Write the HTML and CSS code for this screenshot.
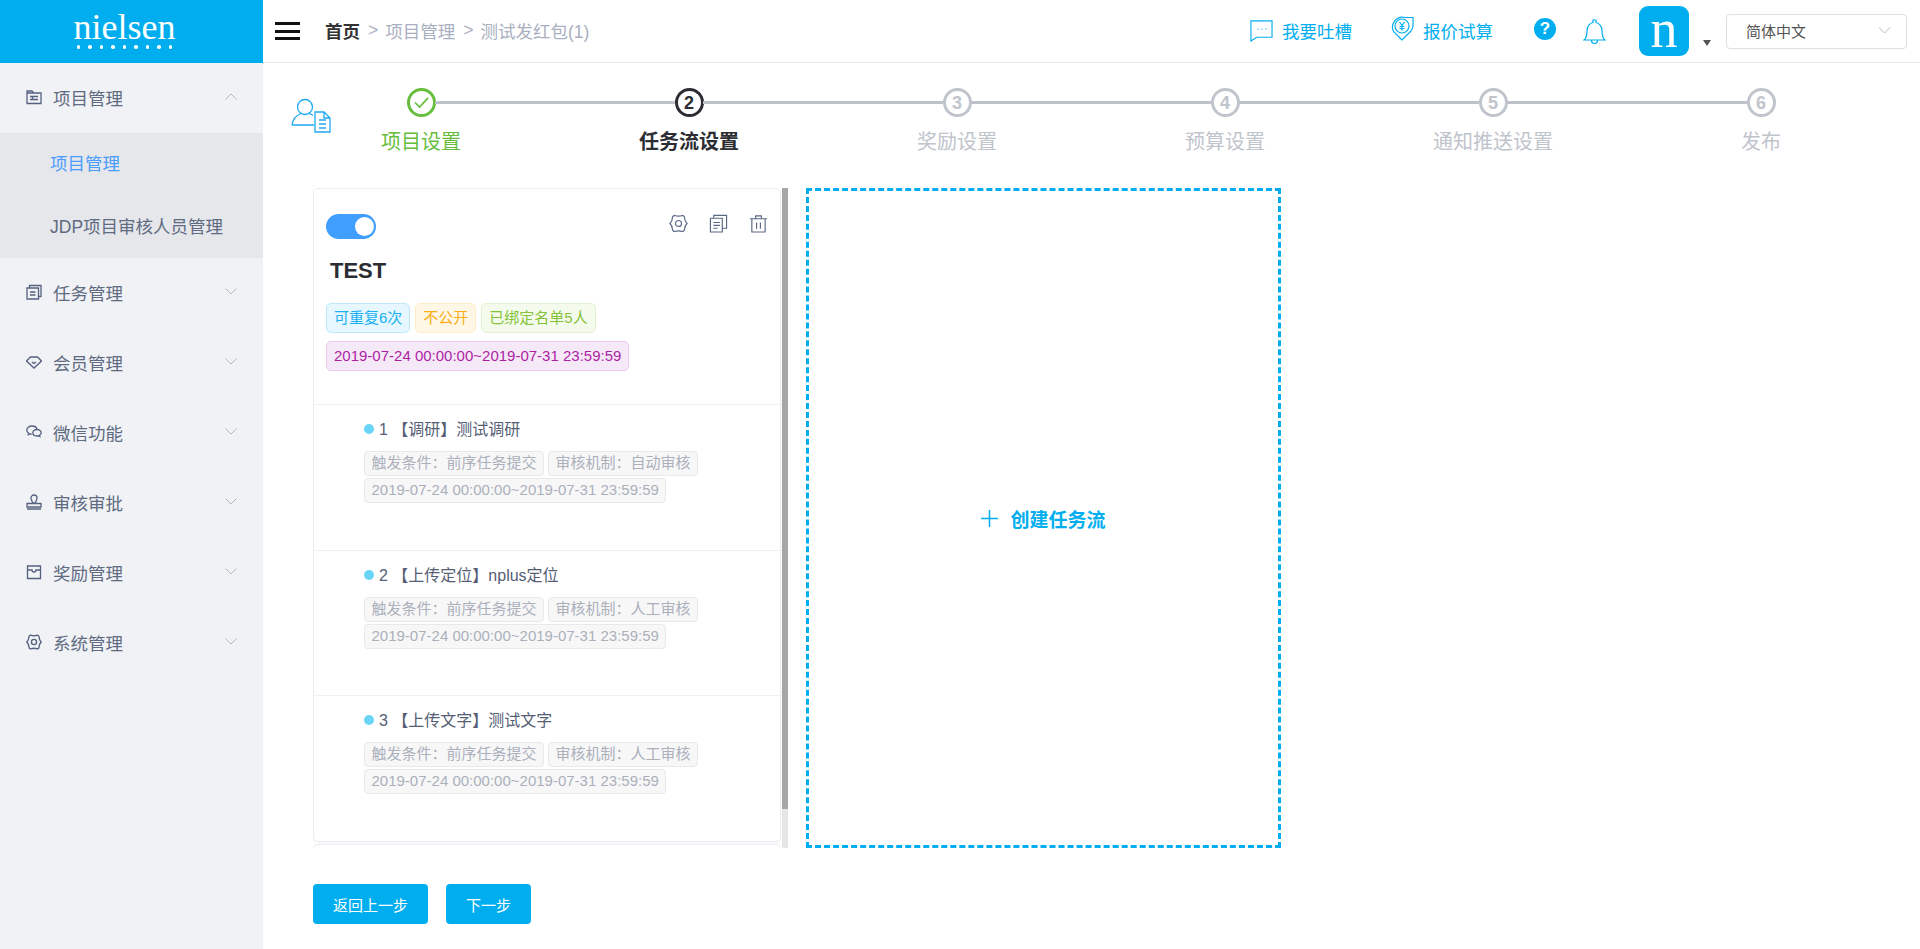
FILE: index.html
```html
<!DOCTYPE html>
<html lang="zh-CN">
<head>
  <meta charset="UTF-8">
  <title>任务流设置</title>
  <link rel="stylesheet" href="styles.css">
</head>
<body>
  <aside class="sidebar">
    <div class="logo">
      <span class="logo-word">nielsen</span>
      <span class="logo-dots"><i></i><i></i><i></i><i></i><i></i><i></i><i></i><i></i><i></i></span>
    </div>
    <nav class="menu">
      <div class="menu-item">
        <svg class="menu-icon" viewBox="0 0 16 16"><path d="M1 14.500V2h5l1.500 2h7.500v10.500zM1 4h6.500M4 7.500h8M4 10.500h8M6.500 7v4"/></svg>
        <span class="menu-label">项目管理</span>
        <svg class="chevron" viewBox="0 0 12 7"><path d="M.5 6.500 6 1l5.500 5.500"/></svg>
      </div>
      <div class="submenu">
        <div class="sub-item active">项目管理</div>
        <div class="sub-item">JDP项目审核人员管理</div>
      </div>
      <div class="menu-item">
        <svg class="menu-icon" viewBox="0 0 16 16"><path d="M1 4h11.500v11H1zM3.500 4V1.500H15V12.500h-2.500M4 8h5.500M4 11h5.500"/></svg>
        <span class="menu-label">任务管理</span>
        <svg class="chevron" viewBox="0 0 12 7"><path d="M.5.500 6 6l5.500-5.500"/></svg>
      </div>
      <div class="menu-item">
        <svg class="menu-icon" viewBox="0 0 16 16"><path d="M4.500 3h7L15.500 7 8 14 .5 7zM6 8l2 1.500L10 8"/></svg>
        <span class="menu-label">会员管理</span>
        <svg class="chevron" viewBox="0 0 12 7"><path d="M.5.500 6 6l5.500-5.500"/></svg>
      </div>
      <div class="menu-item">
        <svg class="menu-icon" viewBox="0 0 16 16"><path d="M6 2C3 2 .8 3.800.8 6c0 1.300.7 2.400 1.900 3.200l-.4 1.500 1.800-.8c.6.200 1 .3 1.700.3M6 2c2.500 0 4.500 1.300 5 3"/><path d="M11 5.500c-2.400 0-4.200 1.500-4.200 3.300S8.600 12 11 12c.5 0 1-.1 1.400-.2l1.500.8-.3-1.400c1-.7 1.600-1.500 1.600-2.400 0-1.800-1.800-3.300-4.200-3.300z"/></svg>
        <span class="menu-label">微信功能</span>
        <svg class="chevron" viewBox="0 0 12 7"><path d="M.5.500 6 6l5.500-5.500"/></svg>
      </div>
      <div class="menu-item">
        <svg class="menu-icon" viewBox="0 0 16 16"><path d="M6.500 9c0-2-1.500-3-1.500-5a3 3 0 0 1 6 0c0 2-1.500 3-1.500 5zM1 9.500h14V13H1zM1 15h14"/></svg>
        <span class="menu-label">审核审批</span>
        <svg class="chevron" viewBox="0 0 12 7"><path d="M.5.500 6 6l5.500-5.500"/></svg>
      </div>
      <div class="menu-item">
        <svg class="menu-icon" viewBox="0 0 16 16"><path d="M1.500 2h13v12.500h-13zM1.500 6h4.500a2 2 0 0 0 4 0h4.500"/></svg>
        <span class="menu-label">奖励管理</span>
        <svg class="chevron" viewBox="0 0 12 7"><path d="M.5.500 6 6l5.500-5.500"/></svg>
      </div>
      <div class="menu-item">
        <svg class="menu-icon gear" viewBox="0 0 20 20"><path d="M6 1.500Q10 3 14 1.500Q16.500 2 16.500 4.500Q16.500 7.500 19 10Q16.500 12.500 16.500 15.500Q16.500 18 14 18.500Q10 17 6 18.500Q3.500 18 3.500 15.500Q3.500 12.500 1 10Q3.500 7.500 3.500 4.500Q3.500 2 6 1.500z"/><circle cx="10" cy="10" r="3.200"/></svg>
        <span class="menu-label">系统管理</span>
        <svg class="chevron" viewBox="0 0 12 7"><path d="M.5.500 6 6l5.500-5.500"/></svg>
      </div>
    </nav>
  </aside>

  <div class="page">
    <header class="topbar">
      <div class="burger"><i></i><i></i><i></i></div>
      <div class="crumbs">
        <b>首页</b><span class="sep">&gt;</span><span>项目管理</span><span class="sep">&gt;</span><span>测试发红包(1)</span>
      </div>
      <div class="top-actions">
        <a class="top-link">
          <svg class="chat-icon" viewBox="0 0 24 24"><path d="M1 2h22v17H7l-6 4zM8 10.500h1M12 10.500h1M16 10.500h1"/></svg>
          我要吐槽
        </a>
        <a class="top-link quote">
          <svg class="quote-icon" viewBox="0 0 24 25"><path d="M12 24 3.500 15.500A10 10 0 0 1 15 1.500h8v8.500a10 10 0 0 1-2.500 5.500z"/><circle cx="12" cy="10" r="7"/><path d="M9.500 6l2.500 3.500L14.500 6M12 9.500V14.500M9.500 10.500h5M9.500 12.500h5"/></svg>
          报价试算
        </a>
        <span class="help">?</span>
        <svg class="bell" viewBox="0 0 23 26"><path d="M1 21h21c-2.500-2-3-4-3-9 0-5-3-8-6-8.500V1h-3v2.500C7 4 4 7 4 12c0 5-.5 7-3 9zM8.500 21.500a3 3 0 0 0 6 0"/></svg>
        <div class="avatar">n</div>
        <span class="caret"></span>
        <div class="lang">
          <span>简体中文</span>
          <svg class="lang-chevron" viewBox="0 0 12 7"><path d="M.5.500 6 6l5.500-5.500"/></svg>
        </div>
      </div>
    </header>

    <main class="content">
      <div class="stepper">
        <svg class="user-icon" viewBox="0 0 40 35"><circle cx="14" cy="9" r="7.500"/><path d="M1 27c1-7 5-10 9-11.500M18 15.500c1.500.5 3 1 4 2M1 27h22"/><path d="M24 14h9l6 6v14H24zM33 14v6h6M28 22h7M28 26h7M28 30h7" class="doc"/></svg>
        <div class="step done">
          <span class="step-circle">
            <svg viewBox="0 0 16 14"><path d="M1 7l5 5 9-10"/></svg>
          </span>
          <span class="step-label">项目设置</span>
        </div>
        <div class="step current"><span class="step-circle">2</span><span class="step-label">任务流设置</span></div>
        <div class="step"><span class="step-circle">3</span><span class="step-label">奖励设置</span></div>
        <div class="step"><span class="step-circle">4</span><span class="step-label">预算设置</span></div>
        <div class="step"><span class="step-circle">5</span><span class="step-label">通知推送设置</span></div>
        <div class="step"><span class="step-circle">6</span><span class="step-label">发布</span></div>
      </div>

      <div class="boards">
        <div class="flow-scroll">
          <div class="flow-list">
            <section class="flow-card">
              <div class="flow-head">
                <div class="flow-tools">
                  <span class="switch"><i></i></span>
                  <span class="tool-icons">
                    <svg viewBox="0 0 20 20"><path d="M6 1.500Q10 3 14 1.500Q16.500 2 16.500 4.500Q16.500 7.500 19 10Q16.500 12.500 16.500 15.500Q16.500 18 14 18.500Q10 17 6 18.500Q3.500 18 3.500 15.500Q3.500 12.500 1 10Q3.500 7.500 3.500 4.500Q3.500 2 6 1.500z"/><circle cx="10" cy="10" r="3.200"/></svg>
                    <svg viewBox="0 0 20 20"><path d="M1.500 4.500h12.500v14.500H1.500zM5 4.500V1.500h13.500V15H14M4.500 9h7M4.500 12h7M4.500 15h4.500"/></svg>
                    <svg viewBox="0 0 20 20"><path d="M1 5h18M3 5v14h14V5M7 5V2h6v3M8 9v6.500M12 9v6.500"/></svg>
                  </span>
                </div>
                <h3 class="flow-title">TEST</h3>
                <div class="tags">
                  <span class="tag blue">可重复6次</span>
                  <span class="tag orange">不公开</span>
                  <span class="tag green">已绑定名单5人</span>
                  <span class="tag purple">2019-07-24 00:00:00~2019-07-31 23:59:59</span>
                </div>
              </div>
              <div class="task">
                <div class="task-title"><i class="dot"></i>1 【调研】测试调研</div>
                <div class="task-tags">
                  <span>触发条件：前序任务提交</span>
                  <span>审核机制：自动审核</span>
                  <span>2019-07-24 00:00:00~2019-07-31 23:59:59</span>
                </div>
              </div>
              <div class="task">
                <div class="task-title"><i class="dot"></i>2 【上传定位】nplus定位</div>
                <div class="task-tags">
                  <span>触发条件：前序任务提交</span>
                  <span>审核机制：人工审核</span>
                  <span>2019-07-24 00:00:00~2019-07-31 23:59:59</span>
                </div>
              </div>
              <div class="task">
                <div class="task-title"><i class="dot"></i>3 【上传文字】测试文字</div>
                <div class="task-tags">
                  <span>触发条件：前序任务提交</span>
                  <span>审核机制：人工审核</span>
                  <span>2019-07-24 00:00:00~2019-07-31 23:59:59</span>
                </div>
              </div>
            </section>
            <section class="flow-card next-card"></section>
          </div>
          <div class="scrollbar"><i></i></div>
        </div>
        <div class="create-flow">
          <svg viewBox="0 0 17 17"><path d="M8.500 0v17M0 8.500h17"/></svg>
          <span>创建任务流</span>
        </div>
      </div>

      <div class="actions">
        <button class="btn prev">返回上一步</button>
        <button class="btn">下一步</button>
      </div>
    </main>
  </div>
</body>
</html>
```

FILE: styles.css
```css
* { box-sizing: border-box; }
html, body { height: 100%; }
body { margin: 0; display: flex; overflow: hidden; background: #fff; font-family: "Liberation Sans", "Noto Sans CJK SC", sans-serif; color: #333; }
svg { fill: none; stroke: currentColor; display: block; }

/* sidebar */
.sidebar { width: 263px; flex: none; background: #f0f2f5; }
.logo { height: 63px; background: #00aeef; color: #fff; display: flex; flex-direction: column; align-items: center; padding: 10px 14px 0 0; }
.logo-word { font-family: "Liberation Serif", serif; font-size: 36px; line-height: 34px; height: 34px; }
.logo-dots { display: flex; gap: 8px; margin-top: 1px; }
.logo-dots i { width: 3.500px; height: 3.500px; border-radius: 50%; background: #fff; }
.menu-item { height: 70px; display: flex; align-items: center; padding: 0 26px; color: #5f6b82; }
.menu-icon { width: 16px; height: 16px; stroke: #54617f; stroke-width: 1.300; margin: -2px 11px 0 0; flex: none; }
.menu-icon.gear { stroke-width: 1.700; }
.menu-label { font-size: 17.500px; flex: 1; margin-top: -2px; }
.chevron { width: 12px; height: 7px; stroke: #b3b6bd; stroke-width: 1; margin-top: -4px; }
.submenu { background: #e5e7eb; }
.sub-item { height: 62.500px; line-height: 63px; padding-left: 50px; font-size: 17.500px; color: #5f6b82; }
.sub-item.active { color: #4a9dff; }

/* top bar */
.page { flex: 1; min-width: 0; display: flex; flex-direction: column; }
.topbar { height: 63px; flex: none; border-bottom: 1px solid #e6e8eb; display: flex; align-items: center; padding: 0 13px 0 12px; }
.burger { width: 25px; display: flex; flex-direction: column; gap: 4.500px; margin-right: 25px; }
.burger i { height: 3px; background: #111; }
.crumbs { font-size: 17.500px; color: #a9afc0; display: flex; align-items: center; padding-bottom: 2px; }
.crumbs b { color: #333; }
.crumbs .sep { margin: 0 7px 0 8px; }
.top-actions { margin-left: auto; display: flex; align-items: center; }
.top-link { display: flex; align-items: center; gap: 9px; font-size: 17.500px; color: #00aeef; padding-bottom: 2px; }
.quote { margin-left: 38px; }
.chat-icon { width: 23px; height: 23px; stroke-width: 1.200; }
.quote-icon { width: 24px; height: 25px; stroke-width: 1.200; margin-top: -4px; }
.help { margin-left: 41px; width: 22px; height: 22px; border-radius: 50%; background: #00aeef; color: #fff; font-weight: bold; font-size: 17px; line-height: 22px; text-align: center; margin-top: -4px; }
.bell { margin-left: 27px; width: 23px; height: 26px; color: #00aeef; stroke-width: 1.200; margin-top: 1px; }
.avatar { margin-left: 33px; width: 50px; height: 50px; border-radius: 9px; background: #00aeef; color: #fff; font-family: "Liberation Serif", serif; font-size: 54px; line-height: 46px; text-align: center; }
.caret { margin: 24px 15px 0 14px; border-left: 4.500px solid transparent; border-right: 4.500px solid transparent; border-top: 6px solid #555; }
.lang { width: 181px; height: 35px; border: 1px solid #dcdfe6; border-radius: 4px; display: flex; align-items: center; justify-content: space-between; padding: 0 15px 2px 19px; font-size: 15px; color: #555; }
.lang-chevron { width: 13px; height: 7px; stroke: #b8bcc4; }

/* steps */
.content { flex: 1; padding: 0 0 0 50px; }
.stepper { display: flex; margin-left: -26px; padding-top: 25px; height: 125px; }
.user-icon { width: 40px; height: 35px; flex: none; margin: 10px -44px 0 4px; color: #1fa9f2; stroke-width: 1.300; }
.step { width: 268px; flex: none; display: flex; flex-direction: column; align-items: center; position: relative; color: #c0c4cc; }
.step:not(:last-child)::after { content: ""; position: absolute; top: 12.500px; left: calc(50% + 14px); width: 240px; height: 3px; background: #bfc2cb; }
.step-circle { width: 29px; height: 29px; border: 3px solid #c0c4cc; border-radius: 50%; display: flex; align-items: center; justify-content: center; font-size: 18px; font-weight: bold; line-height: 1; }
.step-label { font-size: 20px; line-height: 28px; margin-top: 11px; }
.step.done { color: #67bd3c; }
.step.done .step-circle { border-color: #67bd3c; }
.step.done svg { width: 15px; height: 13px; stroke-width: 1.800; }
.step.current { color: #2b2d33; }
.step.current .step-circle { border-color: #2b2d33; }
.step.current .step-label { font-weight: bold; }

/* boards */
.boards { display: flex; align-items: flex-start; gap: 18px; }
.flow-scroll { width: 475px; height: 660px; display: flex; justify-content: space-between; overflow: hidden; }
.flow-list { width: 468px; }
.flow-card { border: 1px solid #ebedf2; border-radius: 5px; background: #fff; box-shadow: 0 1px 2px rgba(0, 0, 0, 0.05); margin-bottom: 2px; }
.flow-head { height: 215px; padding: 25px 12px 0 12px; }
.flow-tools { display: flex; justify-content: space-between; align-items: center; height: 25px; }
.switch { width: 50px; height: 25px; border-radius: 13px; background: #409eff; padding: 3px 2px 0 0; display: flex; justify-content: flex-end; }
.switch i { width: 19px; height: 19px; border-radius: 50%; background: #fff; }
.tool-icons { display: flex; gap: 21px; color: #5a6785; margin: -6px 0 0 0; }
.tool-icons svg { width: 19px; height: 19px; stroke-width: 1.200; }
.flow-title { margin: 19px 0 0 4px; font-size: 22px; line-height: 26px; font-weight: bold; color: #2b2d33; }
.tags { display: flex; flex-wrap: wrap; gap: 8px 5px; margin-top: 19px; }
.tag { height: 30px; line-height: 27px; padding: 0 7px; border: 1px solid; border-radius: 5px; font-size: 15px; }
.tag.blue { background: #e6f7ff; border-color: #bfe9fb; color: #1ab0f0; }
.tag.orange { background: #fff7e6; border-color: #ffecc8; color: #faad14; }
.tag.green { background: #f4fbec; border-color: #e1f2d0; color: #86c23a; }
.tag.purple { background: #f6e9f7; border-color: #efc9ec; color: #ad1fa5; }
.task { height: 145.500px; border-top: 1px solid #f0f1f4; padding: 11px 0 0 50px; }
.task-title { display: flex; align-items: center; height: 24px; font-size: 16px; color: #555e75; white-space: pre; }
.dot { width: 10px; height: 10px; border-radius: 50%; background: #6ad4f8; margin: 2px 5px 0 0; }
.task-tags { display: flex; flex-wrap: wrap; gap: 2px 4px; margin-top: 11px; }
.task-tags span { height: 25px; line-height: 22px; padding: 0 6.500px; border: 1px solid #e9e9eb; border-radius: 4px; background: #f7f7f8; color: #abb0bb; font-size: 15px; }
.next-card { height: 40px; }
.scrollbar { width: 6px; height: 100%; background: #e6e6e6; }
.scrollbar i { display: block; height: 621px; background: #a6a6a6; }
.create-flow { width: 475px; height: 660px; border: 3px dashed #00aeef; display: flex; align-items: center; justify-content: center; gap: 12px; color: #00aeef; font-size: 19px; font-weight: bold; }
.create-flow svg { width: 17px; height: 17px; stroke-width: 1.500; }
.actions { display: flex; gap: 18px; margin-top: 36px; }
.btn { height: 40px; border: 0; border-radius: 4px; background: #00aeef; color: #fff; font-family: inherit; font-size: 15px; padding: 0 20px; }
.btn.prev { width: 115px; }
.btn:not(.prev) { width: 85px; }
```
